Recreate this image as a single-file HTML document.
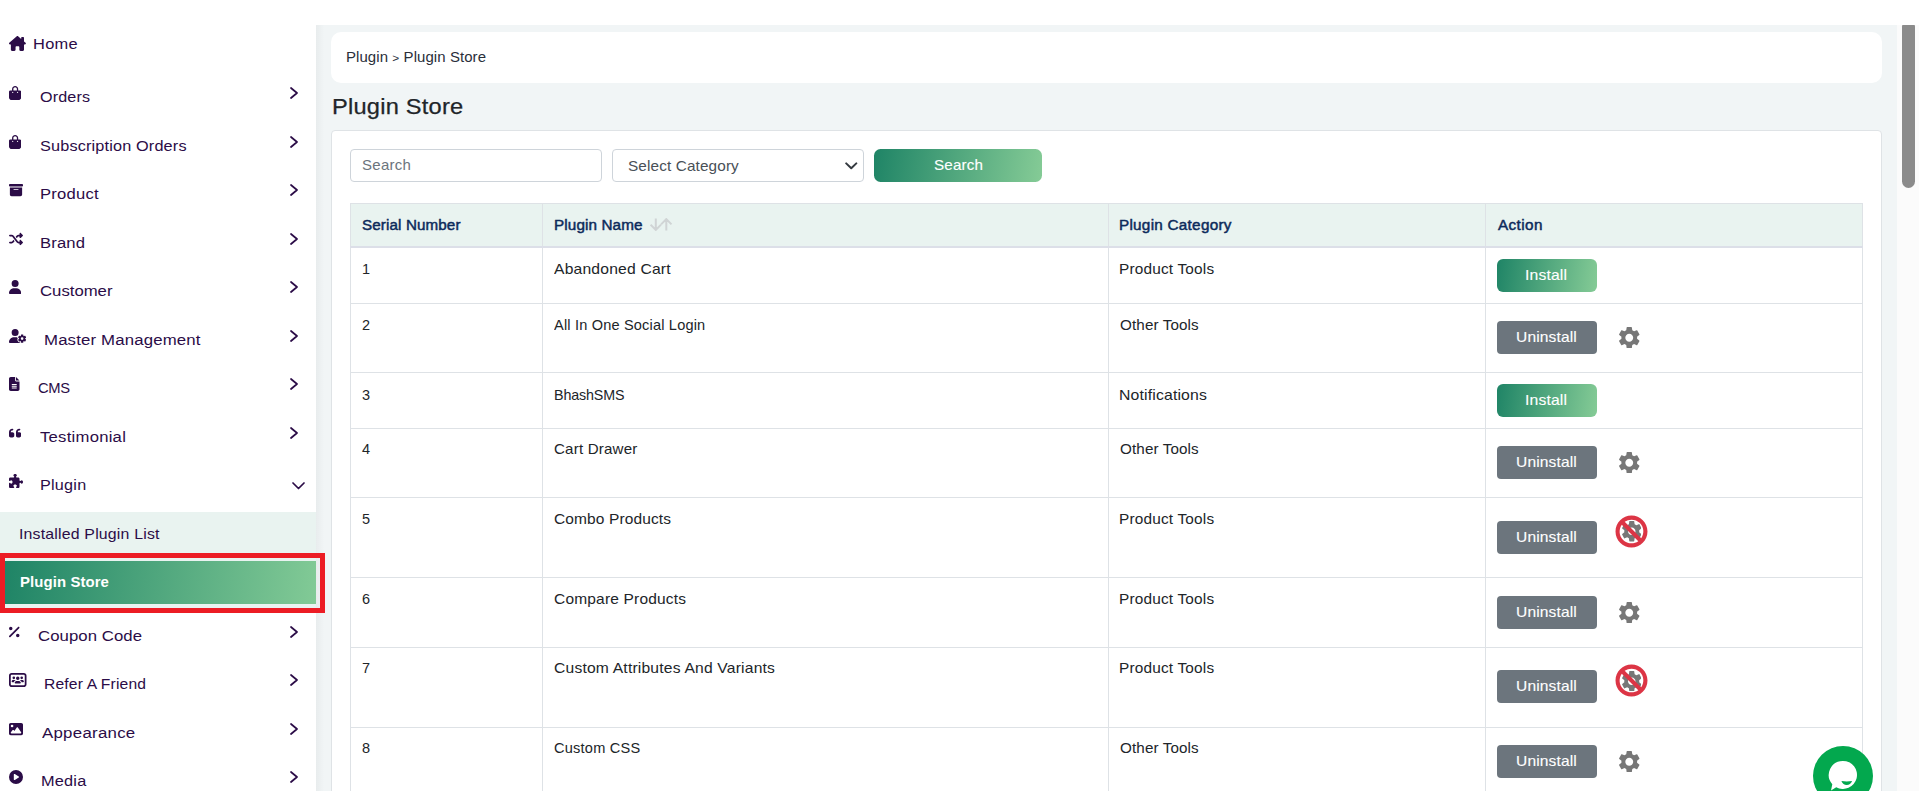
<!DOCTYPE html>
<html lang="en">
<head>
<meta charset="utf-8">
<title>Plugin Store</title>
<style>
*{box-sizing:border-box;margin:0;padding:0}
html,body{width:1919px;height:805px;overflow:hidden;background:#fff}
body{font-family:"Liberation Sans",sans-serif;color:#212529;position:relative}
svg{display:block}
.abs{position:absolute}
/* ---------- frame ---------- */
#main{position:absolute;left:316px;top:25px;width:1581px;height:766px;background:#f1f5f6;overflow:hidden}
#main:before{content:"";position:absolute;left:0;top:0;width:8px;height:100%;background:linear-gradient(90deg,#e8eced,#f1f5f6)}
#track{position:absolute;left:1897px;top:25px;width:22px;height:766px;background:#fbfbfb}
#thumb{position:absolute;left:1902px;top:20px;width:13px;height:168px;background:#8b8b8b;border-radius:7px}
#topbar{position:absolute;left:0;top:0;width:1919px;height:25px;background:#fff}
#botbar{position:absolute;left:0;top:791px;width:1919px;height:14px;background:#fff}
/* ---------- sidebar ---------- */
#side{position:absolute;left:0;top:0;width:316px;height:791px;background:#fff;overflow:hidden;color:#2b0c47;font-size:15px}
.mi{position:absolute;left:0;width:316px;height:24px}
.mi svg{position:absolute;left:9px;fill:#2b0c47}
.mi span{position:absolute;top:0;line-height:24px;white-space:nowrap;font-size:15.5px}
.chev{position:absolute;left:290px;width:8px;height:12px;fill:none;stroke:#2b0c47;stroke-width:1.7;stroke-linecap:round;stroke-linejoin:round}
#sub{position:absolute;left:0;top:512px;width:316px;height:96px;background:#e9f3f0}
#active{position:absolute;left:5px;top:561px;width:311px;height:43px;background:linear-gradient(96deg,#1f8466,#82ca96)}
#redbox{position:absolute;left:0;top:553px;width:325px;height:60px;border:5px solid #ec1c24}
#t-mi-CMS{font-size:14.7px}
/* ---------- content ---------- */
#crumb{position:absolute;left:331px;top:32px;width:1551px;height:51px;background:#fff;border-radius:10px}
#crumb span{position:absolute;left:15px;top:15px;line-height:21px;font-size:14.5px;color:#2a2f3a;white-space:nowrap}
#crumb i{font-style:normal;font-size:11.5px;position:relative;top:-0.5px}
#title{-webkit-text-stroke:0.25px #212529;position:absolute;left:331px;top:90.600px;line-height:32px;font-size:22px;color:#212529;white-space:nowrap}
#card{position:absolute;left:331px;top:130px;width:1551px;height:700px;background:#fff;border:1px solid #dfe3e6;border-radius:4px}
#search{position:absolute;left:350px;top:149px;width:252px;height:33px;border:1px solid #ced4da;border-radius:4px;background:#fff}
#search span{position:absolute;left:11px;top:5px;line-height:21px;font-size:14.5px;color:#6c757d}
#select{position:absolute;left:612px;top:149px;width:252px;height:33px;border:1px solid #ced4da;border-radius:4px;background:#fff}
#select span{position:absolute;left:15px;top:5px;line-height:21px;font-size:15px;color:#495057;white-space:nowrap}
#select svg{position:absolute;left:232px;top:11.800px}
#sbtn{position:absolute;left:874px;top:149px;width:168px;height:33px;border-radius:6.5px;background:linear-gradient(98deg,#1f8466,#85cb96);color:#fff;font-size:14.5px;text-align:center;line-height:32px;-webkit-text-stroke:0.12px #fff}
/* ---------- table ---------- */
#tbl{position:absolute;left:350px;top:203px;width:1512px;border-collapse:collapse;table-layout:fixed;font-size:14.5px}
#tbl th,#tbl td{border:1px solid #dee2e6;vertical-align:top;text-align:left;padding:0 0 0 11px;position:relative;white-space:nowrap}
#tbl th{background:#e9f3f0;color:#0c2a5b;font-weight:normal;-webkit-text-stroke:0.45px #0c2a5b;height:43px;line-height:42px;border-bottom:2px solid #dcdfe8;font-size:14px}
#tbl td{color:#212529;line-height:21px;padding-top:11.2px}
.b{position:absolute;left:11px;width:100px;color:#fff;text-align:center;font-size:14.5px;-webkit-text-stroke:0.12px #fff}
.ins{height:33px;line-height:32px;border-radius:6px;background:linear-gradient(98deg,#1f8466,#85cb96)}
.uni{height:33.5px;line-height:33px;border-radius:4px;background:#6c757d}
.gear{position:absolute;fill:#777}
.sort{position:absolute;left:107px;top:14.200px}
/* text fit */
[id^="t-"]{display:inline-block;transform-origin:0 50%}
#t-bi1{position:relative;left:-3.0px;letter-spacing:0.154px;transform:scaleX(1.082)}
#t-bi3{position:relative;left:-3.0px;letter-spacing:0.154px;transform:scaleX(1.082)}
#t-bu2{position:relative;left:-3.0px;letter-spacing:0.14px;transform:scaleX(1.072)}
#t-bu4{position:relative;left:-3.0px;letter-spacing:0.14px;transform:scaleX(1.072)}
#t-bu5{position:relative;left:-3.0px;letter-spacing:0.14px;transform:scaleX(1.072)}
#t-bu6{position:relative;left:-3.0px;letter-spacing:0.14px;transform:scaleX(1.072)}
#t-bu7{position:relative;left:-3.0px;letter-spacing:0.14px;transform:scaleX(1.072)}
#t-bu8{position:relative;left:-3.0px;letter-spacing:0.14px;transform:scaleX(1.072)}
#t-c1{position:relative;left:-1.2px;letter-spacing:0.173px;transform:scaleX(1.061)}
#t-c2{position:relative;left:-0.2px;letter-spacing:0.114px;transform:scaleX(1.049)}
#t-c3{position:relative;left:-1.2px;letter-spacing:0.138px;transform:scaleX(1.09)}
#t-c4{position:relative;left:-0.2px;letter-spacing:0.114px;transform:scaleX(1.049)}
#t-c5{position:relative;left:-1.2px;letter-spacing:0.173px;transform:scaleX(1.061)}
#t-c6{position:relative;left:-1.2px;letter-spacing:0.173px;transform:scaleX(1.061)}
#t-c7{position:relative;left:-1.2px;letter-spacing:0.173px;transform:scaleX(1.061)}
#t-c8{position:relative;left:-0.2px;letter-spacing:0.114px;transform:scaleX(1.049)}
#t-crumb{position:relative;left:-4.2px;letter-spacing:0.078px;transform:scaleX(1.032)}
#t-h1{position:relative;left:-0.5px;letter-spacing:0.115px;transform:scaleX(1.084)}
#t-h2{position:relative;left:-0.1px;letter-spacing:0.101px;transform:scaleX(1.09)}
#t-h3{position:relative;left:-0.8px;letter-spacing:0.249px;transform:scaleX(1.09)}
#t-h4{position:relative;left:0.8px;letter-spacing:0.367px;transform:scaleX(1.09)}
#t-mi-Appearance{left:41.5px;letter-spacing:0.246px;transform:scaleX(1.086)}
#t-mi-Brand{left:40.4px;letter-spacing:0.14px;transform:scaleX(1.074)}
#t-mi-CMS{left:38.3px;letter-spacing:-0.299px;transform:scaleX(1.003)}
#t-mi-Coupon_Code{left:37.9px;letter-spacing:0.056px;transform:scaleX(1.081)}
#t-mi-Customer{left:39.7px;letter-spacing:0px;transform:scaleX(1.079)}
#t-mi-Home{left:33.3px;letter-spacing:0.283px;transform:scaleX(1.059)}
#t-mi-Master_Management{left:43.7px;letter-spacing:0.15px;transform:scaleX(1.082)}
#t-mi-Media{left:40.5px;letter-spacing:0.19px;transform:scaleX(1.052)}
#t-mi-Orders{left:39.7px;letter-spacing:0.135px;transform:scaleX(1.041)}
#t-mi-Plugin{left:40.4px;letter-spacing:0.23px;transform:scaleX(1.043)}
#t-mi-Product{left:40.4px;letter-spacing:0.218px;transform:scaleX(1.071)}
#t-mi-Refer_A_Friend{left:44.4px;letter-spacing:0.145px;transform:scaleX(1.01)}
#t-mi-Subscription_Orders{left:39.7px;letter-spacing:0.143px;transform:scaleX(1.05)}
#t-mi-Testimonial{left:40.4px;letter-spacing:0.232px;transform:scaleX(1.075)}
#t-n1{position:relative;left:-0.3px;letter-spacing:0.171px;transform:scaleX(1.081)}
#t-n2{position:relative;left:-0.3px;letter-spacing:0.177px;transform:scaleX(1.004)}
#t-n3{position:relative;left:0.1px;letter-spacing:-0.145px;transform:scaleX(0.985)}
#t-n4{position:relative;left:-0.3px;letter-spacing:0.182px;transform:scaleX(1.042)}
#t-n5{position:relative;left:-0.5px;letter-spacing:0.108px;transform:scaleX(1.069)}
#t-n6{position:relative;left:-0.5px;letter-spacing:0.175px;transform:scaleX(1.069)}
#t-n7{position:relative;left:-0.5px;letter-spacing:0.176px;transform:scaleX(1.079)}
#t-n8{position:relative;left:-0.5px;letter-spacing:0.21px;transform:scaleX(1.006)}
#t-ph{position:relative;left:-0.5px;letter-spacing:0.27px;transform:scaleX(1.035)}
#t-sbtn{position:relative;left:-0.2px;letter-spacing:0.172px;transform:scaleX(1.046)}
#t-sel{position:relative;left:-0.4px;letter-spacing:0.126px;transform:scaleX(1.021)}
#t-sub1{left:19.4px;letter-spacing:0.175px;transform:scaleX(1.058)}
#t-sub2{left:20.4px;letter-spacing:0.101px;transform:scaleX(0.994)}
#t-title{position:relative;left:0.5px;letter-spacing:0.212px;transform:scaleX(1.073)}
</style>
</head>
<body>
<div id="main"></div>
<div id="track"></div>
<div id="thumb"></div>
<div id="side">
<div class="mi" style="top:31.9px"><svg style="left:9px;top:4.100000000000001px" width="16.88" height="15" viewBox="0 0 576 512"><path d="M543.8 287.6c17 0 32-14 32-32.100c1-9-3-17-11-24L512 185V64c0-17.700-14.300-32-32-32H448c-17.700 0-32 14.300-32 32v36.700L309.500 7c-6-5-14-7-21-7s-15 1-22 8L10 231.500c-7 7-10 15-10 24c0 18 14 32.100 32 32.100h32v69.700c-.1 .9-.1 1.800-.1 2.800V472c0 22.100 17.900 40 40 40h16c1.200 0 2.400-.1 3.600-.2c1.500 .1 3 .2 4.500 .2H160h24c22.100 0 40-17.900 40-40V448 384c0-17.700 14.300-32 32-32h64c17.700 0 32 14.300 32 32v64 24c0 22.100 17.900 40 40 40h24 32.500c1.400 0 2.800 0 4.200-.1c1.100 .1 2.200 .1 3.300 .1h16c22.100 0 40-17.900 40-40V455.800c.3-2.600 .5-5.300 .5-8.100l-.7-160.200h32z"/></svg><span id="t-mi-Home">Home</span></div>
<div class="mi" style="top:84.5px"><svg style="left:9px;top:1.5px" width="12.25" height="14" viewBox="0 0 448 512"><path d="M160 112c0-35.300 28.700-64 64-64s64 28.700 64 64v48H160V112zm-48 48H48c-26.500 0-48 21.500-48 48V416c0 53 43 96 96 96H352c53 0 96-43 96-96V208c0-26.500-21.500-48-48-48H336V112C336 50.100 285.900 0 224 0S112 50.100 112 112v48zm24 48a24 24 0 1 1 0 48 24 24 0 1 1 0-48zm152 24a24 24 0 1 1 48 0 24 24 0 1 1 -48 0z"/></svg><span id="t-mi-Orders">Orders</span><svg class="chev" style="left:290px;top:2.5px;fill:none" width="8" height="12" viewBox="0 0 8 12"><path d="M1 1l6 5-6 5"/></svg></div>
<div class="mi" style="top:133.5px"><svg style="left:9px;top:1.5px" width="12.25" height="14" viewBox="0 0 448 512"><path d="M160 112c0-35.300 28.700-64 64-64s64 28.700 64 64v48H160V112zm-48 48H48c-26.500 0-48 21.500-48 48V416c0 53 43 96 96 96H352c53 0 96-43 96-96V208c0-26.500-21.500-48-48-48H336V112C336 50.100 285.900 0 224 0S112 50.100 112 112v48zm24 48a24 24 0 1 1 0 48 24 24 0 1 1 0-48zm152 24a24 24 0 1 1 48 0 24 24 0 1 1 -48 0z"/></svg><span id="t-mi-Subscription_Orders">Subscription Orders</span><svg class="chev" style="left:290px;top:2.5px;fill:none" width="8" height="12" viewBox="0 0 8 12"><path d="M1 1l6 5-6 5"/></svg></div>
<div class="mi" style="top:181.5px"><svg style="left:9px;top:1.5px" width="14.0" height="14" viewBox="0 0 512 512"><path d="M32 32H480c17.700 0 32 14.300 32 32V96c0 17.700-14.300 32-32 32H32C14.300 128 0 113.700 0 96V64C0 46.300 14.300 32 32 32zm0 128H480V416c0 35.300-28.700 64-64 64H96c-35.300 0-64-28.700-64-64V160zm128 80c0 8.800 7.200 16 16 16H336c8.800 0 16-7.200 16-16s-7.200-16-16-16H176c-8.800 0-16 7.200-16 16z"/></svg><span id="t-mi-Product">Product</span><svg class="chev" style="left:290px;top:2.5px;fill:none" width="8" height="12" viewBox="0 0 8 12"><path d="M1 1l6 5-6 5"/></svg></div>
<div class="mi" style="top:230.5px"><svg style="left:9px;top:1.5px" width="14.0" height="14" viewBox="0 0 512 512"><path d="M403.800 34.400c12-5 25.700-2.200 34.900 6.900l64 64c6 6 9.400 14.100 9.400 22.600s-3.400 16.600-9.400 22.600l-64 64c-9.200 9.200-22.900 11.900-34.900 6.900s-19.800-16.600-19.800-29.600V160H352c-10.100 0-19.600 4.700-25.600 12.800L284 229.300 244 176l31.200-41.600C293.300 110.200 321.800 96 352 96h32V64c0-12.900 7.800-24.600 19.800-29.600zM164 282.700l40 53.300-31.200 41.600C154.700 401.800 126.200 416 96 416H32c-17.700 0-32-14.300-32-32s14.300-32 32-32H96c10.100 0 19.600-4.700 25.600-12.800L164 282.700zm274.600 188c-9.200 9.200-22.900 11.900-34.900 6.900s-19.800-16.600-19.800-29.600V416H352c-30.200 0-58.700-14.200-76.800-38.400L121.600 172.800c-6-8.100-15.500-12.800-25.600-12.800H32c-17.700 0-32-14.300-32-32s14.300-32 32-32H96c30.200 0 58.700 14.200 76.800 38.400L326.400 339.200c6 8.100 15.500 12.800 25.600 12.800h32V320c0-12.900 7.800-24.600 19.800-29.600s25.700-2.200 34.900 6.900l64 64c6 6 9.400 14.100 9.400 22.600s-3.400 16.600-9.400 22.600l-64 64z"/></svg><span id="t-mi-Brand">Brand</span><svg class="chev" style="left:290px;top:2.5px;fill:none" width="8" height="12" viewBox="0 0 8 12"><path d="M1 1l6 5-6 5"/></svg></div>
<div class="mi" style="top:278.5px"><svg style="left:9px;top:1.5px" width="12.25" height="14" viewBox="0 0 448 512"><path d="M224 256A128 128 0 1 0 224 0a128 128 0 1 0 0 256zm-45.700 48C79.800 304 0 383.800 0 482.300C0 498.700 13.300 512 29.700 512H418.300c16.400 0 29.700-13.300 29.700-29.700C448 383.800 368.200 304 269.700 304H178.300z"/></svg><span id="t-mi-Customer">Customer</span><svg class="chev" style="left:290px;top:2.5px;fill:none" width="8" height="12" viewBox="0 0 8 12"><path d="M1 1l6 5-6 5"/></svg></div>
<div class="mi" style="top:327.5px"><svg style="left:9px;top:1.5px" width="17.5" height="14" viewBox="0 0 640 512"><path d="M224 0a128 128 0 1 1 0 256A128 128 0 1 1 224 0zM178.300 304h91.400c11.800 0 23.400 1.200 34.500 3.300c-2.100 18.500 7.400 35.600 21.800 44.800c-16.600 10.600-26.700 31.600-20 53.300c4 12.900 9.400 25.500 16.400 37.600s15.200 23.100 24.400 33c15.700 16.900 39.600 18.400 57.200 8.700v.9c0 9.200 2.700 18.500 7.900 26.300H29.700C13.300 512 0 498.700 0 482.300C0 383.800 79.800 304 178.300 304zM436 218.200c0-7 4.500-13.300 11.300-14.800c10.500-2.400 21.500-3.700 32.700-3.700s22.200 1.300 32.700 3.700c6.800 1.500 11.300 7.800 11.300 14.800v30.600c7.900 3.400 15.400 7.700 22.300 12.800l24.900-14.300c6.100-3.500 13.700-2.700 18.500 2.400c7.600 8.100 14.300 17.200 20.100 27.200s10.300 20.400 13.500 31c2.100 6.700-1.100 13.700-7.200 17.200l-25 14.400c.4 4 .7 8.100 .7 12.300s-.2 8.200-.7 12.300l25 14.400c6.100 3.500 9.200 10.500 7.200 17.200c-3.300 10.600-7.800 21-13.500 31s-12.500 19.100-20.100 27.200c-4.800 5.100-12.500 5.900-18.500 2.400l-24.900-14.300c-6.900 5.100-14.300 9.400-22.300 12.800l0 30.600c0 7-4.500 13.300-11.300 14.800c-10.500 2.400-21.500 3.700-32.700 3.700s-22.200-1.300-32.700-3.700c-6.800-1.500-11.300-7.800-11.300-14.800V454.800c-8-3.400-15.600-7.700-22.500-12.900l-24.700 14.300c-6.100 3.500-13.700 2.700-18.500-2.400c-7.600-8.100-14.300-17.200-20.100-27.200s-10.300-20.400-13.500-31c-2.100-6.700 1.100-13.700 7.200-17.200l24.800-14.300c-.4-4.100-.7-8.200-.7-12.400s.2-8.300 .7-12.400L343.800 325c-6.100-3.500-9.200-10.500-7.200-17.200c3.300-10.600 7.700-21 13.500-31s12.500-19.100 20.100-27.200c4.800-5.100 12.400-5.900 18.500-2.400l24.800 14.300c6.900-5.100 14.500-9.400 22.500-12.900V218.200zm92.100 133.500a48.100 48.100 0 1 0 -96.100 0 48.100 48.100 0 1 0 96.100 0z"/></svg><span id="t-mi-Master_Management">Master Management</span><svg class="chev" style="left:290px;top:2.5px;fill:none" width="8" height="12" viewBox="0 0 8 12"><path d="M1 1l6 5-6 5"/></svg></div>
<div class="mi" style="top:375.5px"><svg style="left:9px;top:1.5px" width="10.5" height="14" viewBox="0 0 384 512"><path d="M64 0C28.700 0 0 28.700 0 64V448c0 35.300 28.700 64 64 64H320c35.300 0 64-28.700 64-64V160H256c-17.700 0-32-14.300-32-32V0H64zM256 0V128H384L256 0zM112 256H272c8.800 0 16 7.200 16 16s-7.200 16-16 16H112c-8.800 0-16-7.200-16-16s7.200-16 16-16zm0 64H272c8.800 0 16 7.200 16 16s-7.200 16-16 16H112c-8.800 0-16-7.200-16-16s7.200-16 16-16zm0 64H272c8.800 0 16 7.200 16 16s-7.200 16-16 16H112c-8.800 0-16-7.200-16-16s7.200-16 16-16z"/></svg><span id="t-mi-CMS">CMS</span><svg class="chev" style="left:290px;top:2.5px;fill:none" width="8" height="12" viewBox="0 0 8 12"><path d="M1 1l6 5-6 5"/></svg></div>
<div class="mi" style="top:424.5px"><svg style="left:9px;top:1.5px" width="12.25" height="14" viewBox="0 0 448 512"><path d="M0 216C0 149.700 53.700 96 120 96h8c17.700 0 32 14.300 32 32s-14.300 32-32 32h-8c-30.900 0-56 25.100-56 56v8h64c35.300 0 64 28.700 64 64v64c0 35.300-28.700 64-64 64H64c-35.300 0-64-28.700-64-64V320 288 216zm256 0c0-66.300 53.700-120 120-120h8c17.700 0 32 14.300 32 32s-14.300 32-32 32h-8c-30.900 0-56 25.100-56 56v8h64c35.300 0 64 28.700 64 64v64c0 35.300-28.700 64-64 64H320c-35.300 0-64-28.700-64-64V320 288 216z"/></svg><span id="t-mi-Testimonial">Testimonial</span><svg class="chev" style="left:290px;top:2.5px;fill:none" width="8" height="12" viewBox="0 0 8 12"><path d="M1 1l6 5-6 5"/></svg></div>
<div class="mi" style="top:472.5px"><svg style="left:9px;top:1.5px" width="14.0" height="14" viewBox="0 0 512 512"><path d="M192 104.800c0-9.200-5.800-17.300-13.200-22.800C167.200 73.300 160 61.300 160 48c0-26.500 28.700-48 64-48s64 21.500 64 48c0 13.300-7.200 25.300-18.800 34c-7.400 5.500-13.200 13.600-13.200 22.800c0 12.800 10.400 23.200 23.200 23.200H336c26.500 0 48 21.500 48 48v56.800c0 12.800 10.400 23.200 23.200 23.200c9.200 0 17.300-5.800 22.800-13.200c8.700-11.600 20.700-18.800 34-18.800c26.500 0 48 28.700 48 64s-21.500 64-48 64c-13.300 0-25.300-7.200-34-18.800c-5.500-7.400-13.600-13.200-22.800-13.200c-12.800 0-23.200 10.400-23.200 23.200V464c0 26.500-21.500 48-48 48H279.200c-12.800 0-23.200-10.400-23.200-23.200c0-9.200 5.800-17.300 13.200-22.800c11.600-8.700 18.800-20.700 18.800-34c0-26.500-28.700-48-64-48s-64 21.500-64 48c0 13.300 7.200 25.300 18.800 34c7.400 5.500 13.200 13.600 13.200 22.800c0 12.800-10.400 23.200-23.200 23.200H48c-26.500 0-48-21.500-48-48V343.200C0 330.400 10.400 320 23.200 320c9.200 0 17.300 5.800 22.800 13.200C54.700 344.800 66.700 352 80 352c26.500 0 48-28.700 48-64s-21.500-64-48-64c-13.300 0-25.300 7.200-34 18.800C40.500 250.200 32.400 256 23.200 256C10.400 256 0 245.600 0 232.800V176c0-26.500 21.500-48 48-48H168.800c12.800 0 23.200-10.400 23.200-23.200z"/></svg><span id="t-mi-Plugin">Plugin</span><svg class="chev" style="left:292px;top:9.0px;fill:none;width:13px;height:8px" width="13" height="8" viewBox="0 0 13 8"><path d="M1 1l5.500 5.500L12 1"/></svg></div>
<div class="mi" style="top:623.5px"><svg style="left:9px;top:1.5px" width="10.5" height="14" viewBox="0 0 384 512"><path d="M374.600 118.600c12.500-12.500 12.500-32.800 0-45.300s-32.800-12.500-45.300 0l-320 320c-12.500 12.500-12.500 32.800 0 45.300s32.800 12.500 45.300 0l320-320zM128 128A64 64 0 1 0 0 128a64 64 0 1 0 128 0zM384 384a64 64 0 1 0 -128 0 64 64 0 1 0 128 0z"/></svg><span id="t-mi-Coupon_Code">Coupon Code</span><svg class="chev" style="left:290px;top:2.5px;fill:none" width="8" height="12" viewBox="0 0 8 12"><path d="M1 1l6 5-6 5"/></svg></div>
<div class="mi" style="top:671.5px"><svg style="left:9px;top:1.5px" width="17.5" height="14" viewBox="0 0 640 512"><path d="M96 0C43 0 0 43 0 96V416c0 53 43 96 96 96H544c53 0 96-43 96-96V96c0-53-43-96-96-96H96zM64 96c0-17.700 14.300-32 32-32H544c17.700 0 32 14.300 32 32V416c0 17.700-14.300 32-32 32H96c-17.700 0-32-14.300-32-32V96zm159.800 80a48 48 0 1 0 -96 0 48 48 0 1 0 96 0zM96 309.300c0 14.700 11.900 26.700 26.700 26.700h56.100c8-34.100 32.800-61.700 65.200-73.600c-7.500-4.100-16.200-6.400-25.300-6.400H149.300C119.900 256 96 279.900 96 309.300zM461.200 336h56.100c14.700 0 26.700-11.900 26.700-26.700c0-29.500-23.900-53.300-53.300-53.300H421.300c-9.200 0-17.800 2.300-25.300 6.400c32.400 11.900 57.200 39.500 65.200 73.600zM372 289c-3.900-.7-7.900-1-12-1H280c-4.100 0-8.100 .3-12 1c-26 4.400-47.300 22.700-55.900 47c-2.700 7.500-4.100 15.600-4.100 24c0 13.300 10.700 24 24 24H408c13.300 0 24-10.700 24-24c0-8.400-1.400-16.500-4.100-24c-8.600-24.300-29.900-42.600-55.900-47zM512 176a48 48 0 1 0 -96 0 48 48 0 1 0 96 0zM320 256a64 64 0 1 0 0-128 64 64 0 1 0 0 128z"/></svg><span id="t-mi-Refer_A_Friend">Refer A Friend</span><svg class="chev" style="left:290px;top:2.5px;fill:none" width="8" height="12" viewBox="0 0 8 12"><path d="M1 1l6 5-6 5"/></svg></div>
<div class="mi" style="top:720.5px"><svg style="left:9px;top:1.5px" width="14.0" height="14" viewBox="0 0 512 512"><path d="M0 96C0 60.700 28.700 32 64 32H448c35.300 0 64 28.700 64 64V416c0 35.300-28.700 64-64 64H64c-35.300 0-64-28.700-64-64V96zM323.800 202.500c-4.500-6.600-11.900-10.500-19.800-10.500s-15.400 3.900-19.800 10.500l-87 127.600L170.700 297c-4.600-5.700-11.500-9-18.700-9s-14.200 3.300-18.700 9l-64 80c-5.800 7.200-6.900 17.100-2.900 25.400s12.400 13.600 21.600 13.600h96 32H424c8.900 0 17.100-4.900 21.200-12.800s3.600-17.400-1.400-24.700l-120-176zM112 192a48 48 0 1 0 0-96 48 48 0 1 0 0 96z"/></svg><span id="t-mi-Appearance">Appearance</span><svg class="chev" style="left:290px;top:2.5px;fill:none" width="8" height="12" viewBox="0 0 8 12"><path d="M1 1l6 5-6 5"/></svg></div>
<div class="mi" style="top:768.5px"><svg style="left:9px;top:1.5px" width="14.0" height="14" viewBox="0 0 512 512"><path d="M0 256a256 256 0 1 1 512 0A256 256 0 1 1 0 256zM188.300 147.100c-7.600 4.200-12.300 12.300-12.300 20.900V344c0 8.700 4.700 16.700 12.300 20.900s16.800 4.100 24.300-.5l144-88c7.100-4.400 11.500-12.100 11.500-20.500s-4.400-16.100-11.500-20.500l-144-88c-7.400-4.500-16.700-4.700-24.300-.5z"/></svg><span id="t-mi-Media">Media</span><svg class="chev" style="left:290px;top:2.5px;fill:none" width="8" height="12" viewBox="0 0 8 12"><path d="M1 1l6 5-6 5"/></svg></div>
<div id="sub"></div><div id="active"></div>
<div class="mi" style="top:521.5px"><span id="t-sub1" style="font-size:15px">Installed Plugin List</span></div>
<div class="mi" style="top:569.5px"><span id="t-sub2" style="font-size:15px;color:#fff;font-weight:bold">Plugin Store</span></div>
</div>
<div id="redbox"></div>
<div id="crumb"><span id="t-crumb">Plugin <i>&gt;</i> Plugin Store</span></div>
<div id="title"><span id="t-title">Plugin Store</span></div>
<div id="card"></div>
<div id="search"><span id="t-ph">Search</span></div>
<div id="select"><span id="t-sel">Select Category</span><svg width="12.500" height="8" viewBox="0 0 12.500 8"><path d="M1.200 1.400l5.050 4.900 5.050-4.900" fill="none" stroke="#343a40" stroke-width="2" stroke-linecap="round" stroke-linejoin="round"/></svg></div>
<div id="sbtn"><span id="t-sbtn">Search</span></div>
<table id="tbl">
<colgroup><col style="width:192px"><col style="width:566px"><col style="width:377px"><col style="width:377px"></colgroup>
<thead><tr><th><span id="t-h1">Serial Number</span></th><th><span id="t-h2">Plugin Name</span><svg class="sort" width="23" height="13" viewBox="0 0 23 13"><path d="M5.800 .5V12M.6 6.600l5.200 5.300L11 6.600M16.300 12.500V1M11.100 6.400l5.200-5.300 5.200 5.300" fill="none" stroke="#d0d4d5" stroke-width="2"/></svg></th><th><span id="t-h3">Plugin Category</span></th><th><span id="t-h4">Action</span></th></tr></thead><tbody>
<tr style="height:56px"><td style="padding-top:11.2px">1</td><td style="padding-top:11.2px"><span id="t-n1">Abandoned Cart</span></td><td style="padding-top:11.2px"><span id="t-c1">Product Tools</span></td><td><div class="b ins" style="top:11.200px"><span class="bti" id="t-bi1">Install</span></div></td></tr>
<tr style="height:69px"><td style="padding-top:11.2px">2</td><td style="padding-top:11.2px"><span id="t-n2">All In One Social Login</span></td><td style="padding-top:11.2px"><span id="t-c2">Other Tools</span></td><td><div class="b uni" style="top:17.1px"><span class="btu" id="t-bu2">Uninstall</span></div><svg class="gear" style="left:133px;top:23.1px" width="20.5" height="21.4" viewBox="2.62 2.4 18.76 19.2" preserveAspectRatio="none"><path d="M19.14,12.94c0.04-0.3,0.06-0.61,0.06-0.94c0-0.32-0.02-0.64-0.07-0.94l2.03-1.58c0.18-0.14,0.23-0.41,0.12-0.61 l-1.92-3.32c-0.12-0.22-0.37-0.29-0.59-0.22l-2.39,0.96c-0.5-0.38-1.03-0.7-1.62-0.94L14.4,2.81c-0.04-0.24-0.24-0.41-0.48-0.41 h-3.84c-0.24,0-0.43,0.17-0.47,0.41L9.25,5.35C8.66,5.59,8.12,5.92,7.63,6.29L5.240,5.33c-0.22-0.08-0.47,0-0.59,0.22L2.740,8.87 C2.62,9.08,2.66,9.34,2.86,9.48l2.03,1.58C4.84,11.36,4.8,11.69,4.8,12s0.02,0.64,0.07,0.94l-2.03,1.58 c-0.18,0.14-0.23,0.41-0.12,0.61l1.92,3.32c0.12,0.22,0.37,0.29,0.59,0.22l2.39-0.96c0.5,0.38,1.03,0.7,1.62,0.94l0.36,2.54 c0.05,0.24,0.24,0.41,0.48,0.41h3.84c0.24,0,0.44-0.17,0.47-0.41l0.36-2.54c0.59-0.24,1.13-0.56,1.62-0.94l2.39,0.96 c0.22,0.08,0.47,0,0.59-0.22l1.92-3.32c0.12-0.22,0.07-0.47-0.12-0.61L19.14,12.94z M12,15.6c-1.98,0-3.6-1.62-3.6-3.6 s1.620-3.600,3.600-3.600s3.600,1.620,3.600,3.600S13.980,15.600,12,15.600z"/></svg></td></tr>
<tr style="height:56px"><td style="padding-top:12px">3</td><td style="padding-top:12px"><span id="t-n3">BhashSMS</span></td><td style="padding-top:12px"><span id="t-c3">Notifications</span></td><td><div class="b ins" style="top:11.200px"><span class="bti" id="t-bi3">Install</span></div></td></tr>
<tr style="height:69px"><td style="padding-top:10.8px">4</td><td style="padding-top:10.8px"><span id="t-n4">Cart Drawer</span></td><td style="padding-top:10.8px"><span id="t-c4">Other Tools</span></td><td><div class="b uni" style="top:17.2px"><span class="btu" id="t-bu4">Uninstall</span></div><svg class="gear" style="left:133px;top:23.2px" width="20.5" height="21.4" viewBox="2.62 2.4 18.76 19.2" preserveAspectRatio="none"><path d="M19.14,12.94c0.04-0.3,0.06-0.61,0.06-0.94c0-0.32-0.02-0.64-0.07-0.94l2.03-1.58c0.18-0.14,0.23-0.41,0.12-0.61 l-1.92-3.32c-0.12-0.22-0.37-0.29-0.59-0.22l-2.39,0.96c-0.5-0.38-1.03-0.7-1.62-0.94L14.4,2.81c-0.04-0.24-0.24-0.41-0.48-0.41 h-3.84c-0.24,0-0.43,0.17-0.47,0.41L9.25,5.35C8.66,5.59,8.12,5.92,7.63,6.29L5.240,5.33c-0.22-0.08-0.47,0-0.59,0.22L2.740,8.87 C2.62,9.08,2.66,9.34,2.86,9.48l2.03,1.58C4.84,11.36,4.8,11.69,4.8,12s0.02,0.64,0.07,0.94l-2.03,1.58 c-0.18,0.14-0.23,0.41-0.12,0.61l1.92,3.32c0.12,0.22,0.37,0.29,0.59,0.22l2.39-0.96c0.5,0.38,1.03,0.7,1.62,0.94l0.36,2.54 c0.05,0.24,0.24,0.41,0.48,0.41h3.84c0.24,0,0.44-0.17,0.47-0.41l0.36-2.54c0.59-0.24,1.13-0.56,1.62-0.94l2.39,0.96 c0.22,0.08,0.47,0,0.59-0.22l1.92-3.32c0.12-0.22,0.07-0.47-0.12-0.61L19.14,12.94z M12,15.6c-1.98,0-3.6-1.62-3.6-3.6 s1.620-3.600,3.600-3.600s3.600,1.620,3.600,3.600S13.980,15.600,12,15.600z"/></svg></td></tr>
<tr style="height:80px"><td style="padding-top:11.2px">5</td><td style="padding-top:11.2px"><span id="t-n5">Combo Products</span></td><td style="padding-top:11.2px"><span id="t-c5">Product Tools</span></td><td><div class="b uni" style="top:23px"><span class="btu" id="t-bu5">Uninstall</span></div><svg class="gear" style="left:135.5px;top:23.8px" width="19.5" height="20.5" viewBox="2.62 2.4 18.76 19.2" preserveAspectRatio="none"><path d="M19.14,12.94c0.04-0.3,0.06-0.61,0.06-0.94c0-0.32-0.02-0.64-0.07-0.94l2.03-1.58c0.18-0.14,0.23-0.41,0.12-0.61 l-1.92-3.32c-0.12-0.22-0.37-0.29-0.59-0.22l-2.39,0.96c-0.5-0.38-1.03-0.7-1.62-0.94L14.4,2.81c-0.04-0.24-0.24-0.41-0.48-0.41 h-3.84c-0.24,0-0.43,0.17-0.47,0.41L9.25,5.35C8.66,5.59,8.12,5.92,7.63,6.29L5.240,5.33c-0.22-0.08-0.47,0-0.59,0.22L2.740,8.87 C2.62,9.08,2.66,9.34,2.86,9.48l2.03,1.58C4.84,11.36,4.8,11.69,4.8,12s0.02,0.64,0.07,0.94l-2.03,1.58 c-0.18,0.14-0.23,0.41-0.12,0.61l1.92,3.32c0.12,0.22,0.37,0.29,0.59,0.22l2.39-0.96c0.5,0.38,1.03,0.7,1.62,0.94l0.36,2.54 c0.05,0.24,0.24,0.41,0.48,0.41h3.84c0.24,0,0.44-0.17,0.47-0.41l0.36-2.54c0.59-0.24,1.13-0.56,1.62-0.94l2.39,0.96 c0.22,0.08,0.47,0,0.59-0.22l1.92-3.32c0.12-0.22,0.07-0.47-0.12-0.61L19.14,12.94z M12,15.6c-1.98,0-3.6-1.62-3.6-3.6 s1.620-3.600,3.600-3.600s3.600,1.620,3.600,3.600S13.980,15.600,12,15.600z"/></svg><svg class="ban" style="position:absolute;left:128.700px;top:17.45px" width="33" height="33" viewBox="0 0 512 512"><path fill="#dc3545" d="M256 8C119.034 8 8 119.033 8 256s111.034 248 248 248 248-111.034 248-248S392.967 8 256 8zm130.108 117.892c65.448 65.448 70 165.481 20.677 235.637L150.470 105.216c70.204-49.356 170.226-44.735 235.638 20.676zM125.892 386.108c-65.448-65.448-70-165.481-20.677-235.637L361.530 406.784c-70.203 49.356-170.226 44.736-235.638-20.676z"/></svg></td></tr>
<tr style="height:70px"><td style="padding-top:11.2px">6</td><td style="padding-top:11.2px"><span id="t-n6">Compare Products</span></td><td style="padding-top:11.2px"><span id="t-c6">Product Tools</span></td><td><div class="b uni" style="top:18.2px"><span class="btu" id="t-bu6">Uninstall</span></div><svg class="gear" style="left:133px;top:24.2px" width="20.5" height="21.4" viewBox="2.62 2.4 18.76 19.2" preserveAspectRatio="none"><path d="M19.14,12.94c0.04-0.3,0.06-0.61,0.06-0.94c0-0.32-0.02-0.64-0.07-0.94l2.03-1.58c0.18-0.14,0.23-0.41,0.12-0.61 l-1.92-3.32c-0.12-0.22-0.37-0.29-0.59-0.22l-2.39,0.96c-0.5-0.38-1.03-0.7-1.62-0.94L14.4,2.81c-0.04-0.24-0.24-0.41-0.48-0.41 h-3.84c-0.24,0-0.43,0.17-0.47,0.41L9.25,5.35C8.66,5.59,8.12,5.92,7.63,6.29L5.240,5.33c-0.22-0.08-0.47,0-0.59,0.22L2.740,8.87 C2.62,9.08,2.66,9.34,2.86,9.48l2.03,1.58C4.84,11.36,4.8,11.69,4.8,12s0.02,0.64,0.07,0.94l-2.03,1.58 c-0.18,0.14-0.23,0.41-0.12,0.61l1.92,3.32c0.12,0.22,0.37,0.29,0.59,0.22l2.39-0.96c0.5,0.38,1.03,0.7,1.62,0.94l0.36,2.54 c0.05,0.24,0.24,0.41,0.48,0.41h3.84c0.24,0,0.44-0.17,0.47-0.41l0.36-2.54c0.59-0.24,1.13-0.56,1.62-0.94l2.39,0.96 c0.22,0.08,0.47,0,0.59-0.22l1.92-3.32c0.12-0.22,0.07-0.47-0.12-0.61L19.14,12.94z M12,15.6c-1.98,0-3.6-1.62-3.6-3.6 s1.620-3.600,3.600-3.600s3.600,1.620,3.600,3.600S13.980,15.600,12,15.600z"/></svg></td></tr>
<tr style="height:80px"><td style="padding-top:10.4px">7</td><td style="padding-top:10.4px"><span id="t-n7">Custom Attributes And Variants</span></td><td style="padding-top:10.4px"><span id="t-c7">Product Tools</span></td><td><div class="b uni" style="top:22.4px"><span class="btu" id="t-bu7">Uninstall</span></div><svg class="gear" style="left:135.5px;top:23.2px" width="19.5" height="20.5" viewBox="2.62 2.4 18.76 19.2" preserveAspectRatio="none"><path d="M19.14,12.94c0.04-0.3,0.06-0.61,0.06-0.94c0-0.32-0.02-0.64-0.07-0.94l2.03-1.58c0.18-0.14,0.23-0.41,0.12-0.61 l-1.92-3.32c-0.12-0.22-0.37-0.29-0.59-0.22l-2.39,0.96c-0.5-0.38-1.03-0.7-1.62-0.94L14.4,2.81c-0.04-0.24-0.24-0.41-0.48-0.41 h-3.84c-0.24,0-0.43,0.17-0.47,0.41L9.25,5.35C8.66,5.59,8.12,5.92,7.63,6.29L5.240,5.33c-0.22-0.08-0.47,0-0.59,0.22L2.740,8.87 C2.62,9.08,2.66,9.34,2.86,9.48l2.03,1.58C4.84,11.36,4.8,11.69,4.8,12s0.02,0.64,0.07,0.94l-2.03,1.58 c-0.18,0.14-0.23,0.41-0.12,0.61l1.92,3.32c0.12,0.22,0.37,0.29,0.59,0.22l2.39-0.96c0.5,0.38,1.03,0.7,1.62,0.94l0.36,2.54 c0.05,0.24,0.24,0.41,0.48,0.41h3.84c0.24,0,0.44-0.17,0.47-0.41l0.36-2.54c0.59-0.24,1.13-0.56,1.62-0.94l2.39,0.96 c0.22,0.08,0.47,0,0.59-0.22l1.92-3.32c0.12-0.22,0.07-0.47-0.12-0.61L19.14,12.94z M12,15.6c-1.98,0-3.6-1.62-3.6-3.6 s1.620-3.600,3.600-3.600s3.600,1.620,3.600,3.600S13.980,15.600,12,15.600z"/></svg><svg class="ban" style="position:absolute;left:128.700px;top:16.85px" width="33" height="33" viewBox="0 0 512 512"><path fill="#dc3545" d="M256 8C119.034 8 8 119.033 8 256s111.034 248 248 248 248-111.034 248-248S392.967 8 256 8zm130.108 117.892c65.448 65.448 70 165.481 20.677 235.637L150.470 105.216c70.204-49.356 170.226-44.735 235.638 20.676zM125.892 386.108c-65.448-65.448-70-165.481-20.677-235.637L361.530 406.784c-70.203 49.356-170.226 44.736-235.638-20.676z"/></svg></td></tr>
<tr style="height:70px"><td style="padding-top:10.4px">8</td><td style="padding-top:10.4px"><span id="t-n8">Custom CSS</span></td><td style="padding-top:10.4px"><span id="t-c8">Other Tools</span></td><td><div class="b uni" style="top:17.3px"><span class="btu" id="t-bu8">Uninstall</span></div><svg class="gear" style="left:133px;top:23.3px" width="20.5" height="21.4" viewBox="2.62 2.4 18.76 19.2" preserveAspectRatio="none"><path d="M19.14,12.94c0.04-0.3,0.06-0.61,0.06-0.94c0-0.32-0.02-0.64-0.07-0.94l2.03-1.58c0.18-0.14,0.23-0.41,0.12-0.61 l-1.92-3.32c-0.12-0.22-0.37-0.29-0.59-0.22l-2.39,0.96c-0.5-0.38-1.03-0.7-1.62-0.94L14.4,2.81c-0.04-0.24-0.24-0.41-0.48-0.41 h-3.84c-0.24,0-0.43,0.17-0.47,0.41L9.25,5.35C8.66,5.59,8.12,5.92,7.63,6.29L5.240,5.33c-0.22-0.08-0.47,0-0.59,0.22L2.740,8.87 C2.62,9.08,2.66,9.34,2.86,9.48l2.03,1.58C4.84,11.36,4.8,11.69,4.8,12s0.02,0.64,0.07,0.94l-2.03,1.58 c-0.18,0.14-0.23,0.41-0.12,0.61l1.92,3.32c0.12,0.22,0.37,0.29,0.59,0.22l2.39-0.96c0.5,0.38,1.03,0.7,1.62,0.94l0.36,2.54 c0.05,0.24,0.24,0.41,0.48,0.41h3.84c0.24,0,0.44-0.17,0.47-0.41l0.36-2.54c0.59-0.24,1.13-0.56,1.62-0.94l2.39,0.96 c0.22,0.08,0.47,0,0.59-0.22l1.92-3.32c0.12-0.22,0.07-0.47-0.12-0.61L19.14,12.94z M12,15.6c-1.98,0-3.6-1.62-3.6-3.6 s1.620-3.600,3.600-3.600s3.600,1.620,3.600,3.600S13.980,15.600,12,15.600z"/></svg></td></tr>
</tbody>
</table>
<svg id="chat" style="position:absolute;left:1813px;top:745.800px" width="60" height="60" viewBox="0 0 60 60"><circle cx="30" cy="30" r="30" fill="#03a84e"/><path d="M30 14.900a14 14 0 1 1-6.800 26.240l-5.200 3.400 1.300-6.400A14 14 0 0 1 30 14.900z" fill="#fff"/><path d="M28.400 35.100q5.300.9 10.700 0-1.600 3.900-5.400 3.900-3.700 0-5.300-3.900z" fill="#03a84e"/></svg>
<div id="topbar"></div>
<div id="botbar"></div>
</body>
</html>
